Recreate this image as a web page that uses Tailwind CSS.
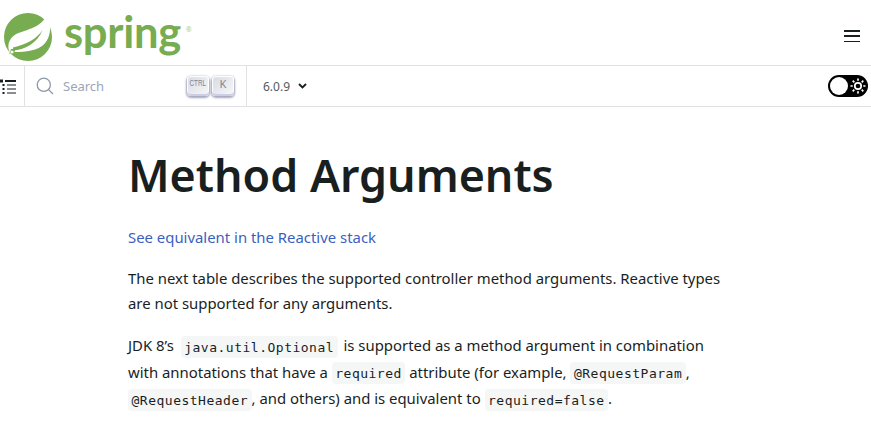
<!DOCTYPE html>
<html><head><meta charset="utf-8"><script src="https://cdn.jsdelivr.net/npm/@tailwindcss/browser@4"></script></head>
<body class="bg-white font-['Noto_Sans',sans-serif] text-[#191e1e] overflow-hidden">
<header class="h-[66px] flex items-center justify-between border-b border-[#e1e1e1]">
  <div class="flex items-center pl-[4px] pt-[8px]">
    <svg width="48" height="48" viewBox="0 0 48 48" class="block"><circle cx="24" cy="24" r="24" fill="#77ac50"/><path d="M6 40 C3 34 4 27 10 22.500 C20 16 35 17 42.700 2.500 C49 14 46 27 38 33 C30 39 16 39 9 39 Z" fill="#fff"/><path d="M9 37.500 C20 37 34 30 38.500 17 C33 26 22 31.500 9 34.500 Z" fill="#77ac50"/><path d="M5 41.500 C7 39.500 8 39 11 38.500 L11 36 L7 36 Z" fill="#77ac50"/><circle cx="8" cy="39" r="1.600" fill="#fff"/></svg>
    <span class="ml-[12px] mt-[-9px] text-[#77ac50] text-[43.500px] leading-none font-bold font-['Lato',sans-serif] tracking-[-0.3px]">spring</span>
    <span class="ml-[5px] text-[#a9cb90] text-[7px] leading-none mt-[-14px]">®</span>
  </div>
  <button class="mr-[11px] mt-[7px] flex flex-col w-[16px] h-[12px] justify-between">
    <span class="block h-[1.500px] bg-[#191e1e]"></span><span class="block h-[1.500px] bg-[#191e1e]"></span><span class="block h-[1.500px] bg-[#191e1e]"></span>
  </button>
</header>
<nav class="h-[41px] flex items-center border-b border-[#e1e1e1]">
  <div class="w-[25px] h-full border-r border-[#e1e1e1] flex items-center">
    <svg width="17" height="17" viewBox="0 0 17 17" class="block"><g fill="#191e1e"><rect x="0" y="1.500" width="3" height="3"/><rect x="2.500" y="6" width="2" height="2"/><rect x="2.500" y="10" width="2" height="2"/><rect x="2.500" y="14" width="2" height="2"/><rect x="5" y="2" width="11" height="2"/><rect x="7" y="6.500" width="9" height="1"/><rect x="7" y="10.500" width="9" height="1"/><rect x="7" y="14.500" width="9" height="1"/></g></svg>
  </div>
  <div class="w-[222px] h-full border-r border-[#e1e1e1] flex items-center pl-[11px]">
    <svg width="18" height="18" viewBox="0 0 18 18" fill="none" stroke="#8d97a6" stroke-width="1.300"><circle cx="7.800" cy="7.800" r="6.600"/><path d="M12.600 12.600 L17 17"/></svg>
    <span class="ml-[9px] mt-[1px] text-[13px] text-[#9aa5b8]">Search</span>
    <span class="ml-[auto] flex gap-[3px] mr-[12px] mb-[1px]">
      <kbd class="w-[22px] h-[20px] rounded-[4px] pb-[3px] bg-linear-[-225deg,#d5dbe4,#f8f8f8] shadow-[inset_0_-2px_0_0_#cdcde6,inset_0_0_1px_1px_#fff,0_1px_2px_1px_rgba(30,35,90,0.4)] text-[9px] text-[#7f8497] flex items-center justify-center font-['Liberation_Sans']"><span class="scale-x-70">CTRL</span></kbd>
      <kbd class="w-[22px] h-[20px] rounded-[4px] pb-[3px] bg-linear-[-225deg,#d5dbe4,#f8f8f8] shadow-[inset_0_-2px_0_0_#cdcde6,inset_0_0_1px_1px_#fff,0_1px_2px_1px_rgba(30,35,90,0.4)] text-[11px] text-[#7f8497] flex items-center justify-center font-['Noto_Sans']">K</kbd>
    </span>
  </div>
  <div class="pl-[16px] pt-[2px] flex items-center text-[12px] text-[#555b5e]">6.0.9
    <svg class="ml-[8px] mb-[3px]" width="9" height="6" viewBox="0 0 9 6" fill="none" stroke="#191e1e" stroke-width="1.800"><path d="M1 1 L4.500 4.500 L8 1"/></svg>
  </div>
  <div class="ml-auto mr-[3px] w-[40px] h-[22px] rounded-full bg-black flex items-center justify-between pl-[2px] pr-[2px]">
    <span class="block w-[18px] h-[18px] rounded-full bg-white"></span>
    <svg width="16" height="16" viewBox="0 0 16 16" fill="none" stroke="#fff" stroke-width="1.700"><circle cx="8" cy="8" r="3.200"/><path d="M8 0.500v2.200M8 13.300v2.200M0.500 8h2.200M13.300 8h2.200M2.700 2.700l1.600 1.600M11.700 11.700l1.600 1.600M2.700 13.300l1.600-1.600M11.700 4.300l1.600-1.600"/></svg>
  </div>
</nav>
<main class="ml-[128px] w-[600px]">
  <h1 class="mt-[38px] text-[44.800px] leading-[60px] font-semibold">Method Arguments</h1>
  <p class="mt-[19px] text-[14.900px] leading-[26px] text-[#3b5fc0]">See equivalent in the Reactive stack</p>
  <p class="mt-[16px] text-[14.900px] leading-[25px]">The next table describes the supported controller method arguments. Reactive types are not supported for any arguments.</p>
  <p class="mt-[16px] text-[14.900px] leading-[26.500px]">JDK 8’s <code class="font-['DejaVu_Sans_Mono',monospace] text-[13px] tracking-[0.5px] leading-none bg-[#f5f6f6] rounded-[4px] ml-[3px] mr-[2px] px-[3.500px] py-[3.500px]">java.util.Optional</code> is supported as a method argument in combination with annotations that have a <code class="font-['DejaVu_Sans_Mono',monospace] text-[13px] tracking-[0.5px] leading-none bg-[#f5f6f6] rounded-[4px] px-[3.500px] py-[3.500px]">required</code> attribute (for example, <code class="font-['DejaVu_Sans_Mono',monospace] text-[13px] tracking-[0.5px] leading-none bg-[#f5f6f6] rounded-[4px] px-[3.500px] py-[3.500px]">@RequestParam</code>, <code class="font-['DejaVu_Sans_Mono',monospace] text-[13px] tracking-[0.5px] leading-none bg-[#f5f6f6] rounded-[4px] px-[3.500px] py-[3.500px]">@RequestHeader</code>, and others) and is equivalent to <code class="font-['DejaVu_Sans_Mono',monospace] text-[13px] tracking-[0.5px] leading-none bg-[#f5f6f6] rounded-[4px] px-[3.500px] py-[3.500px]">required=false</code>.</p>
</main>
</body></html>
